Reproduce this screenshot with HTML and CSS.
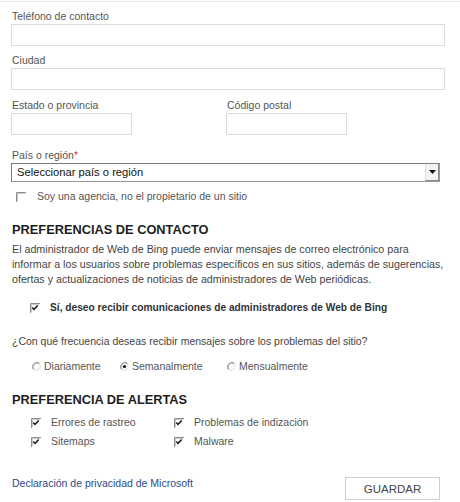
FILE: index.html
```html
<!DOCTYPE html>
<html lang="es">
<head>
    <meta charset="UTF-8">
    <meta name="viewport" content="width=device-width, initial-scale=1.0">
    <title>Perfil - Bing Webmaster</title>
    <link rel="stylesheet" href="styles.css">
</head>
<body>
    <div class="topline"></div>
    <div class="form">
        <div class="field">
            <label>Teléfono de contacto</label>
            <input class="text-input" type="text">
        </div>
        <div class="field">
            <label>Ciudad</label>
            <input class="text-input" type="text">
        </div>
        <div class="field-row">
            <div class="col">
                <label>Estado o provincia</label>
                <input class="text-input short" type="text">
            </div>
            <div class="col">
                <label>Código postal</label>
                <input class="text-input short" type="text">
            </div>
        </div>
        <div class="field country">
            <label>País o región<span class="req">*</span></label>
            <div class="select">
                <span class="select-text">Seleccionar país o región</span>
                <span class="select-btn">
                    <svg width="7" height="4" viewBox="0 0 7 4"><path d="M0 0h7L3.5 4z" fill="#111"/></svg>
                </span>
            </div>
        </div>
        <div class="check-row agency">
            <span class="cb"><svg width="10" height="10" viewBox="0 0 10 10"><rect x="0" y="0" width="10" height="10" fill="#fff"/><path d="M0.5 10V0.5H10" stroke="#8c8c8c" fill="none"/><path d="M1.5 9V1.5H9" stroke="#c8c8c8" fill="none"/></svg></span>
            <span>Soy una agencia, no el propietario de un sitio</span>
        </div>

        <h2 class="section">PREFERENCIAS DE CONTACTO</h2>
        <p class="intro">
            <span class="line">El administrador de Web de Bing puede enviar mensajes de correo electrónico para</span>
            <span class="line">informar a los usuarios sobre problemas específicos en sus sitios, además de sugerencias,</span>
            <span class="line">ofertas y actualizaciones de noticias de administradores de Web periódicas.</span>
        </p>
        <div class="check-row optin">
            <span class="cb"><svg width="10" height="10" viewBox="0 0 10 10"><rect x="0" y="0" width="10" height="10" fill="#fff"/><path d="M0.5 10V0.5H10" stroke="#8c8c8c" fill="none"/><path d="M1.5 9V1.5H9" stroke="#c8c8c8" fill="none"/><path d="M2.3 4.6l1.7 1.8 3.7-3.9" stroke="#111" stroke-width="1.5" fill="none"/></svg></span>
            <span>Sí, deseo recibir comunicaciones de administradores de Web de Bing</span>
        </div>

        <p class="question">¿Con qué frecuencia deseas recibir mensajes sobre los problemas del sitio?</p>
        <div class="radios">
            <div class="radio">
                <svg width="9" height="9" viewBox="0 0 9 9"><path d="M7.3 1.7A4 4 0 0 0 1.7 7.3" stroke="#8c8c8c" stroke-width="1.2" fill="none"/><path d="M7.3 1.7A4 4 0 0 1 1.7 7.3" stroke="#e4e4e4" stroke-width="1.2" fill="none"/></svg>
                <span>Diariamente</span>
            </div>
            <div class="radio">
                <svg width="9" height="9" viewBox="0 0 9 9"><path d="M7.3 1.7A4 4 0 0 0 1.7 7.3" stroke="#8c8c8c" stroke-width="1.2" fill="none"/><path d="M7.3 1.7A4 4 0 0 1 1.7 7.3" stroke="#e4e4e4" stroke-width="1.2" fill="none"/><circle cx="4.5" cy="4.5" r="1.6" fill="#111"/></svg>
                <span>Semanalmente</span>
            </div>
            <div class="radio">
                <svg width="9" height="9" viewBox="0 0 9 9"><path d="M7.3 1.7A4 4 0 0 0 1.7 7.3" stroke="#8c8c8c" stroke-width="1.2" fill="none"/><path d="M7.3 1.7A4 4 0 0 1 1.7 7.3" stroke="#e4e4e4" stroke-width="1.2" fill="none"/></svg>
                <span>Mensualmente</span>
            </div>
        </div>

        <h2 class="section alerts-title">PREFERENCIA DE ALERTAS</h2>
        <div class="alerts">
            <div class="check-row">
                <span class="cb"><svg width="10" height="10" viewBox="0 0 10 10"><rect x="0" y="0" width="10" height="10" fill="#fff"/><path d="M0.5 10V0.5H10" stroke="#8c8c8c" fill="none"/><path d="M1.5 9V1.5H9" stroke="#c8c8c8" fill="none"/><path d="M2.3 4.6l1.7 1.8 3.7-3.9" stroke="#111" stroke-width="1.5" fill="none"/></svg></span>
                <span>Errores de rastreo</span>
            </div>
            <div class="check-row">
                <span class="cb"><svg width="10" height="10" viewBox="0 0 10 10"><rect x="0" y="0" width="10" height="10" fill="#fff"/><path d="M0.5 10V0.5H10" stroke="#8c8c8c" fill="none"/><path d="M1.5 9V1.5H9" stroke="#c8c8c8" fill="none"/><path d="M2.3 4.6l1.7 1.8 3.7-3.9" stroke="#111" stroke-width="1.5" fill="none"/></svg></span>
                <span>Problemas de indización</span>
            </div>
            <div class="check-row">
                <span class="cb"><svg width="10" height="10" viewBox="0 0 10 10"><rect x="0" y="0" width="10" height="10" fill="#fff"/><path d="M0.5 10V0.5H10" stroke="#8c8c8c" fill="none"/><path d="M1.5 9V1.5H9" stroke="#c8c8c8" fill="none"/><path d="M2.3 4.6l1.7 1.8 3.7-3.9" stroke="#111" stroke-width="1.5" fill="none"/></svg></span>
                <span>Sitemaps</span>
            </div>
            <div class="check-row">
                <span class="cb"><svg width="10" height="10" viewBox="0 0 10 10"><rect x="0" y="0" width="10" height="10" fill="#fff"/><path d="M0.5 10V0.5H10" stroke="#8c8c8c" fill="none"/><path d="M1.5 9V1.5H9" stroke="#c8c8c8" fill="none"/><path d="M2.3 4.6l1.7 1.8 3.7-3.9" stroke="#111" stroke-width="1.5" fill="none"/></svg></span>
                <span>Malware</span>
            </div>
        </div>

        <div class="footer">
            <a class="privacy" href="#">Declaración de privacidad de Microsoft</a>
            <button class="save" type="button">GUARDAR</button>
        </div>
    </div>
</body>
</html>
```

FILE: styles.css
```css
body{
    margin: 0;
    font-family: "Liberation Sans", Arial, sans-serif;
    color: #555;
    background-color: #fff;
}

.topline{
    height: 1px;
    margin-top: 1px;
    background-color: #e8e8e8;
}

.form{
    padding: 0 15px 0 11px;
}

.field,
.field-row .col{
    font-size: 10.5px;
}

.field{
    margin-top: 7px;
}

.field label,
.col label{
    display: block;
    line-height: 15px;
    padding-left: 1px;
}

.field-row{
    display: flex;
    margin-top: 8px;
}

.field-row .col{
    width: 215px;
}

.text-input{
    display: block;
    width: 434px;
    height: 22px;
    margin: 0;
    padding: 0;
    box-sizing: border-box;
    border: 1px solid #dcdcdc;
    background-color: #fff;
}

.text-input.short{
    width: 121px;
}

.country{
    margin-top: 13px;
}

.req{
    color: #d04040;
}

.select{
    display: flex;
    width: 429px;
    height: 19px;
    box-sizing: border-box;
    border: 1px solid #9a9a9a;
    border-top-color: #7a7a7a;
    border-left-color: #7a7a7a;
    background-color: #fff;
}

.select-text{
    flex: 1;
    padding-left: 5px;
    font-size: 11.2px;
    line-height: 17px;
    color: #111;
}

.select-btn{
    width: 14px;
    display: flex;
    align-items: center;
    justify-content: center;
    background-color: #f4f4f4;
    border-left: 1px solid #e2e2e2;
    border-right: 1px solid #8a8a8a;
    border-bottom: 1px solid #8a8a8a;
    box-sizing: border-box;
}

.check-row{
    display: flex;
    align-items: center;
    gap: 10px;
    font-size: 10.5px;
    line-height: 15px;
}

.cb{
    display: flex;
    width: 10px;
    height: 10px;
}

.agency{
    margin-top: 7px;
    padding-left: 5px;
    gap: 11px;
}

.section{
    margin: 17px 0 0;
    padding-left: 1px;
    font-size: 12.8px;
    line-height: 18px;
    font-weight: bold;
    color: #1e1e1e;
}

.intro{
    margin: 3px 0 0;
    padding-left: 1px;
    font-size: 10.7px;
    line-height: 15px;
    color: #444;
}

.intro .line{
    display: block;
    white-space: nowrap;
}

.optin{
    margin-top: 13px;
    padding-left: 19px;
    font-size: 10.2px;
    font-weight: bold;
    color: #333;
    line-height: 16px;
}

.question{
    margin: 18px 0 0;
    padding-left: 1px;
    font-size: 10.5px;
    line-height: 15px;
    color: #444;
}

.radios{
    display: grid;
    grid-template-columns: 88px 107px auto;
    margin-top: 10px;
    padding-left: 21px;
    font-size: 10.5px;
    line-height: 15px;
}

.radio{
    display: flex;
    align-items: center;
    gap: 3px;
}

.alerts-title{
    margin-top: 17px;
}

.alerts{
    display: grid;
    grid-template-columns: 143px auto;
    margin-top: 4px;
    padding-left: 20px;
}

.alerts .check-row{
    line-height: 19px;
}

.footer{
    display: flex;
    justify-content: space-between;
    margin-top: 26px;
}

.privacy{
    padding-left: 1px;
    font-size: 10.5px;
    line-height: 13px;
    color: #2b4a8b;
    text-decoration: none;
}

.save{
    width: 95px;
    height: 23px;
    margin: 0 5px 0 0;
    padding: 0;
    border: 1px solid #cfcfcf;
    background-color: #fff;
    font-family: "Liberation Sans", Arial, sans-serif;
    font-size: 11.5px;
    color: #444;
}
```
